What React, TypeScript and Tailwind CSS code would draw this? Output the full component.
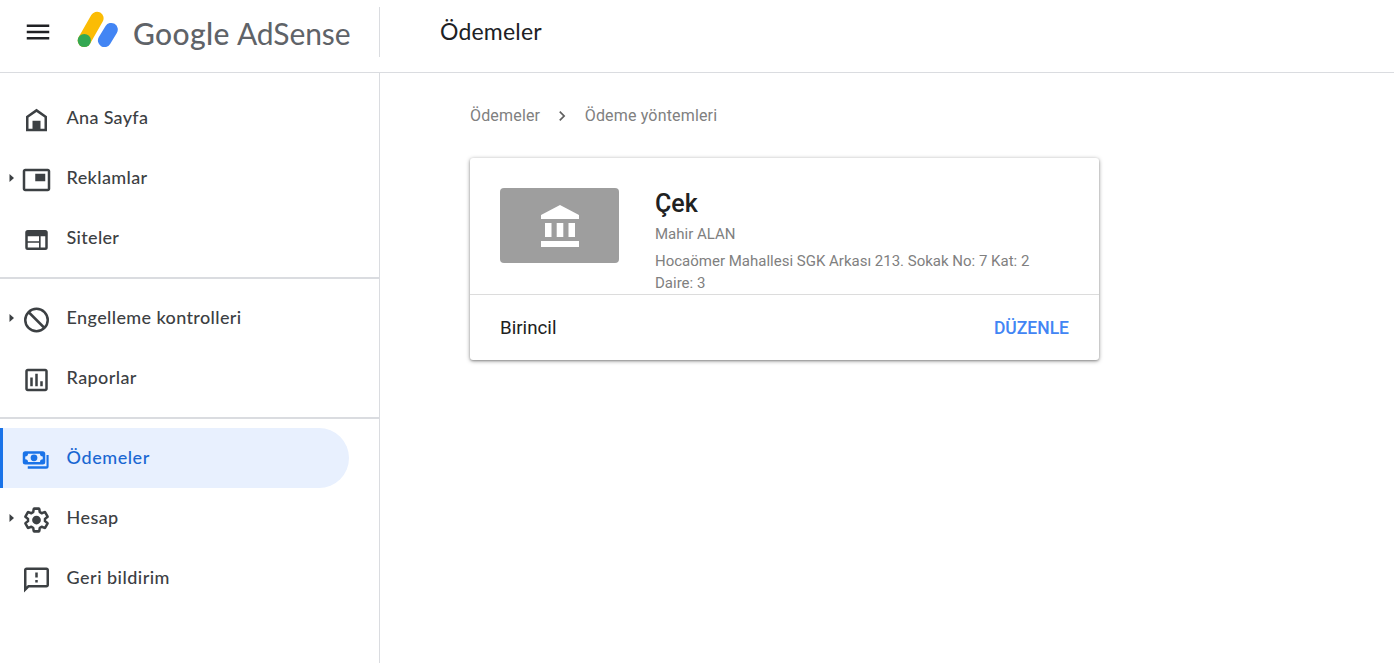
import type { ReactNode } from 'react'
import { MdChevronRight, MdMenu, MdOutlineFeedback } from 'react-icons/md'

interface NavEntry {
  label: string
  icon: ReactNode
  tracking: string
  expandable?: boolean
  active?: boolean
}

function Glyph({ children }: { children: ReactNode }) {
  return (
    <svg viewBox="-0.4 0 24 24" className="size-[30px] overflow-visible" fill="currentColor">
      {children}
    </svg>
  )
}

const groups: NavEntry[][] = [
  [
    {
      label: 'Ana Sayfa',
      tracking: 'tracking-[0.3px]',
      icon: (
        <Glyph>
          <path d="M12 3L3.600 9v12h16.800V9L12 3zm6.400 16H5.600v-9L12 5.500l6.400 4.500v9z" />
          <path d="M8.800 12.600h6.400V19.500H8.800z" />
        </Glyph>
      ),
    },
    {
      label: 'Reklamlar',
      tracking: 'tracking-[0.36px]',
      expandable: true,
      icon: (
        <Glyph>
          <path d="M19 7h-8v6h8V7zm2-4H3c-1.1 0-2 .9-2 2v14c0 1.1.9 1.98 2 1.98h18c1.1 0 2-.88 2-1.98V5c0-1.1-.9-2-2-2zm0 16.01H3V4.98h18v14.03z" />
        </Glyph>
      ),
    },
    {
      label: 'Siteler',
      tracking: 'tracking-[0.3px]',
      icon: (
        <Glyph>
          <path
            fillRule="evenodd"
            d="M5 4h14a2 2 0 0 1 2 2v12a2 2 0 0 1-2 2H5a2 2 0 0 1-2-2V6a2 2 0 0 1 2-2zM5 9v4h9V9H5zm0 5.2V18h9v-3.8H5zM15.3 9v9H19V9h-3.7z"
          />
        </Glyph>
      ),
    },
  ],
  [
    {
      label: 'Engelleme kontrolleri',
      tracking: 'tracking-[0.37px]',
      expandable: true,
      icon: (
        <Glyph>
          <circle cx="12" cy="12" r="9" fill="none" stroke="currentColor" strokeWidth="2" />
          <path d="M5.6 5.6l12.8 12.8" stroke="currentColor" strokeWidth="2" />
        </Glyph>
      ),
    },
    {
      label: 'Raporlar',
      tracking: 'tracking-[0.4px]',
      icon: (
        <Glyph>
          <path d="M19 3H5c-1.1 0-2 .9-2 2v14c0 1.1.9 2 2 2h14c1.1 0 2-.9 2-2V5c0-1.1-.9-2-2-2zm0 16H5V5h14v14zM7 10h2v7H7zM11 7h2v10h-2zM15 13h2v4h-2z" />
        </Glyph>
      ),
    },
  ],
  [
    {
      label: 'Ödemeler',
      tracking: 'tracking-[0.55px]',
      active: true,
      icon: (
        <Glyph>
          <path
            fillRule="evenodd"
            d="M3 5h14a2 2 0 0 1 2 2v6.500a2 2 0 0 1-2 2H3a2 2 0 0 1-2-2V7a2 2 0 0 1 2-2zm2.200 2A2.200 2.200 0 0 1 3 9.200v2.100a2.200 2.200 0 0 1 2.200 2.200h9.600a2.200 2.200 0 0 1 2.200-2.200V9.200A2.200 2.200 0 0 1 14.800 7H5.200z"
          />
          <circle cx="10" cy="10.200" r="2.700" />
          <path d="M20 8h1.700v9a2 2 0 0 1-2 2H5v-2h15V8z" />
        </Glyph>
      ),
    },
    {
      label: 'Hesap',
      tracking: 'tracking-[0.4px]',
      expandable: true,
      icon: (
        <Glyph>
          <path
            transform="translate(1.08 1.08) scale(0.91)"
            fill="none"
            stroke="currentColor"
            strokeWidth="2.2"
            strokeLinejoin="round"
            d="M19.43 12.98c.04-.32.07-.64.07-.98 0-.34-.03-.66-.07-.98l2.11-1.65c.19-.15.24-.42.12-.64l-2-3.46a.5.5 0 0 0-.61-.22l-2.49 1c-.52-.4-1.08-.73-1.69-.98l-.38-2.65A.49.49 0 0 0 14 2h-4c-.25 0-.46.18-.49.42l-.38 2.65c-.61.25-1.17.59-1.69.98l-2.49-1a.5.5 0 0 0-.61.22l-2 3.46c-.13.22-.07.49.12.64l2.11 1.65c-.04.32-.07.65-.07.98 0 .33.03.66.07.98l-2.11 1.65c-.19.15-.24.42-.12.64l2 3.46a.5.5 0 0 0 .61.22l2.49-1c.52.4 1.08.73 1.69.98l.38 2.65c.03.24.24.42.49.42h4c.25 0 .46-.18.49-.42l.38-2.65c.61-.25 1.17-.59 1.69-.98l2.49 1a.5.5 0 0 0 .61-.22l2-3.46c.12-.22.07-.49-.12-.64z"
          />
          <circle cx="12" cy="12" r="3.500" />
        </Glyph>
      ),
    },
    {
      label: 'Geri bildirim',
      tracking: 'tracking-[0.47px]',
      icon: (
        <Glyph>
          <MdOutlineFeedback size={24} />
        </Glyph>
      ),
    },
  ],
]

function NavItem({ label, icon, tracking, expandable, active }: NavEntry) {
  return (
    <li
      className={
        active
          ? 'mr-[30px] flex h-[60px] items-center rounded-r-full border-l-[3px] border-[#1a73e8] bg-[#e8f0fe] text-[#1967d2]'
          : 'flex h-[60px] items-center border-l-[3px] border-transparent text-[#3c4043]'
      }
    >
      <span className="w-[18px] pl-1.5">
        {expandable && (
          <svg viewBox="-0.5 0 5 8" className="h-2 w-[5px]" fill="currentColor">
            <path d="M0 0l4.500 4L0 8z" />
          </svg>
        )}
      </span>
      <span className={active ? 'mt-1 text-[#1a73e8]' : 'mt-1'}>{icon}</span>
      <span className={`mb-0.5 ml-[15.6px] text-[18px] font-medium ${tracking}`}>{label}</span>
    </li>
  )
}

function Header() {
  return (
    <header className="flex h-[73px] shrink-0 border-b border-[#dadce0]">
      <div className="mt-[7px] flex h-[50px] w-[380px] items-center border-r border-[#dadce0] pl-[22.5px]">
        <MdMenu size={30} className="text-[#202124]" />
        <svg viewBox="0 0 42 38" className="mb-1 ml-[24.5px] h-[38px] w-[42px]">
          <path d="M7.300 29.500L20 7.300" stroke="#fbbc04" strokeWidth="13.200" strokeLinecap="round" />
          <path d="M27.500 29.500L34.200 18.500" stroke="#4285f4" strokeWidth="13.200" strokeLinecap="round" />
          <circle cx="7.300" cy="29.500" r="6.600" fill="#34a853" />
        </svg>
        <div className="ml-[14px] mt-0.5 flex items-baseline gap-[7px] text-[#5f6368]">
          <span className="text-[30px] font-medium tracking-[0.4px]">Google</span>
          <span className="text-[30px] tracking-[-0.1px]">AdSense</span>
        </div>
      </div>
      <h1 className="ml-[60px] mt-[15px] text-[23px] leading-[33px] tracking-[0.2px] text-[#202124]">
        Ödemeler
      </h1>
    </header>
  )
}

function PaymentCard() {
  return (
    <section className="mt-[30px] w-[629px] rounded-[3px] bg-white shadow-[0_1px_4px_rgba(0,0,0,0.4),0_1px_2px_rgba(0,0,0,0.2)]">
      <div className="flex h-[137px] border-b border-[#dcdcdc] px-[30px] pt-[30px]">
        <div className="flex h-[75px] w-[119px] shrink-0 items-center justify-center rounded bg-[#9e9e9e]">
          <svg viewBox="0 0 38 42" className="h-[42px] w-[38px]" fill="#fff">
            <path d="M19 0l19 10v4H0v-4zM4 18h6.500v14H4zM15.700 18h6.600v14h-6.600zM27.500 18H34v14h-6.500zM0 36h38v6H0z" />
          </svg>
        </div>
        <div className="ml-9 w-[390px] text-[15px] leading-[22px] text-[#808080]">
          <h2 className="mt-px text-[25px] font-medium leading-[30px] text-[#212121]">Çek</h2>
          <p className="mt-1">Mahir ALAN</p>
          <p className="mt-[5px]">
            Hocaömer Mahallesi SGK Arkası 213. Sokak No: 7 Kat: 2 Daire: 3
          </p>
        </div>
      </div>
      <div className="flex h-[65px] items-center justify-between px-[30px] pt-0.5">
        <span className="text-[18.75px] text-[#212121]">Birincil</span>
        <button className="text-[17.5px] font-medium text-[#4285f4]">DÜZENLE</button>
      </div>
    </section>
  )
}

export default function App() {
  return (
    <div className="flex h-screen flex-col overflow-hidden bg-white font-['Lato','Open_Sans',sans-serif]">
      <Header />
      <div className="flex min-h-0 flex-1">
        <nav className="w-[380px] shrink-0 border-r border-[#dadce0] pt-[15px]">
          {groups.map((entries, i) => (
            <ul
              key={i}
              className={i > 0 ? 'mt-[9px] border-t-2 border-[#dadce0] pt-[9px]' : undefined}
            >
              {entries.map((entry) => (
                <NavItem key={entry.label} {...entry} />
              ))}
            </ul>
          ))}
        </nav>
        <main className="pl-[90px] pt-[30px] font-['Roboto',sans-serif]">
          <div className="flex h-[25px] items-center text-[16px] text-[#808080]">
            <span className="tracking-[0.17px]">Ödemeler</span>
            <MdChevronRight size={20} className="ml-3 mr-[12.5px] text-[#616161]" />
            <span className="tracking-[0.17px]">Ödeme yöntemleri</span>
          </div>
          <PaymentCard />
        </main>
      </div>
    </div>
  )
}
